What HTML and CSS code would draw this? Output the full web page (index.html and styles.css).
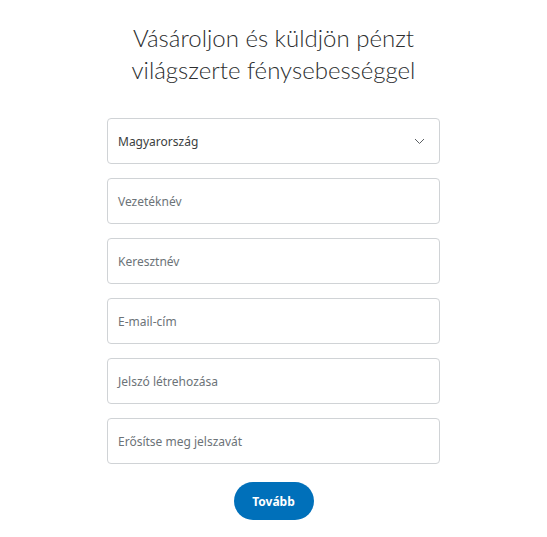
FILE: index.html
```html
<!DOCTYPE html>
<html lang="hu">
<head>
    <meta charset="UTF-8">
    <meta name="viewport" content="width=device-width, initial-scale=1.0">
    <title>Regisztráció</title>
    <link rel="stylesheet" href="styles.css">
</head>
<body>

<div class="signup">
    <h1>Vásároljon és küldjön pénzt<br>világszerte fénysebességgel</h1>

    <form class="form">
        <div class="field select">
            <span class="value">Magyarország</span>
            <svg class="chevron" width="11" height="7" viewBox="0 0 11 7">
                <path d="M1 1 L5.5 5.5 L10 1" fill="none" stroke="#5b5f63" stroke-width="1"/>
            </svg>
        </div>
        <div class="field"><span class="placeholder">Vezetéknév</span></div>
        <div class="field"><span class="placeholder">Keresztnév</span></div>
        <div class="field"><span class="placeholder">E-mail-cím</span></div>
        <div class="field"><span class="placeholder">Jelszó létrehozása</span></div>
        <div class="field"><span class="placeholder">Erősítse meg jelszavát</span></div>

        <button type="button" class="btn">Tovább</button>
    </form>
</div>

</body>
</html>
```

FILE: styles.css
```css
body {
    margin: 0;
    padding: 0;
    background: #fff;
    font-family: "Noto Sans", "Open Sans", sans-serif;
    color: #2c2e2f;
}

.signup {
    width: 333px;
    margin: 0 auto;
    padding-top: 22px;
}

h1 {
    font-family: Lato, sans-serif;
    font-weight: 300;
    font-size: 24px;
    line-height: 32px;
    text-align: center;
    margin: 0 -40px 32px;
    color: #2c2e2f;
}

.form {
    display: flex;
    flex-direction: column;
    gap: 14px;
}

.field {
    height: 44px;
    border: 1px solid #d0d3d6;
    border-radius: 4px;
    display: flex;
    align-items: center;
    justify-content: space-between;
    padding: 0 14px 0 10px;
    font-size: 12px;
}

.placeholder {
    color: #6c7378;
}

.value {
    color: #3b3e40;
}

.btn {
    align-self: center;
    margin-top: 4px;
    width: 80px;
    height: 38px;
    border: none;
    border-radius: 19px;
    background-color: #0070ba;
    color: #fff;
    font-family: "Noto Sans", sans-serif;
    font-weight: bold;
    font-size: 12px;
    cursor: pointer;
}
```
